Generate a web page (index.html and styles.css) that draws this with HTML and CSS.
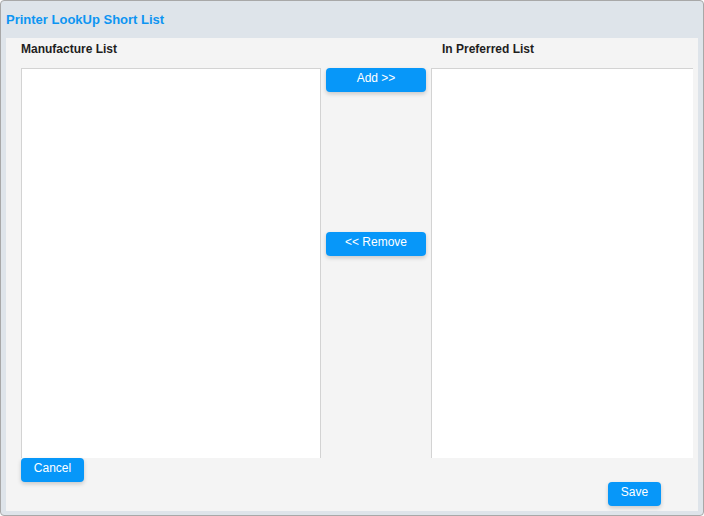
FILE: index.html
```html
<!DOCTYPE html>
<html>
<head>
<meta charset="utf-8">
<link rel="stylesheet" href="styles.css">
</head>
<body>
<div class="frame">
  <div class="title">Printer LookUp Short List</div>
  <div class="panel">
    <div class="grid">
      <div class="head">Manufacture List</div>
      <div></div>
      <div class="head head-right">In Preferred List</div>
      <div class="list list-left"></div>
      <div class="mid">
        <button class="btn btn-mid">Add &gt;&gt;</button>
        <button class="btn btn-mid">&lt;&lt; Remove</button>
      </div>
      <div class="list list-right"></div>
    </div>
    <div class="footer">
      <button class="btn btn-cancel">Cancel</button>
      <button class="btn btn-save">Save</button>
    </div>
  </div>
</div>
</body>
</html>
```

FILE: styles.css
```css
html, body {
  margin: 0;
  padding: 0;
  background: #ffffff;
}
body {
  font-family: "Liberation Sans", Arial, sans-serif;
}
.frame {
  box-sizing: border-box;
  width: 704px;
  height: 516px;
  border: 1px solid #a8a8a8;
  border-radius: 4px;
  background: #dee4ea;
  display: flex;
  flex-direction: column;
}
.title {
  height: 37px;
  box-sizing: border-box;
  padding: 11px 0 0 5px;
  font-size: 13px;
  font-weight: bold;
  color: #0d95f2;
  line-height: 15px;
}
.panel {
  margin: 0 5px;
  height: 473px;
  background: #f4f4f4;
  box-sizing: border-box;
  padding: 0 5px 0 15px;
  display: flex;
  flex-direction: column;
}
.grid {
  display: grid;
  grid-template-columns: 300px 110px 262px;
  grid-template-rows: 30px 390px;
}
.head {
  font-size: 12px;
  font-weight: bold;
  color: #1e1e1e;
  padding-top: 4px;
  line-height: 14px;
}
.head-right {
  padding-left: 11px;
}
.list {
  background: #ffffff;
  border-top: 1px solid #d3d3d3;
  border-left: 1px solid #d3d3d3;
}
.list-left {
  border-right: 1px solid #d3d3d3;
}
.mid {
  display: flex;
  flex-direction: column;
  align-items: flex-start;
  gap: 140px;
  padding-left: 5px;
}
.btn {
  font-family: "Liberation Sans", Arial, sans-serif;
  font-size: 12px;
  color: #ffffff;
  background: #0797f9;
  border: none;
  border-radius: 4px;
  height: 24px;
  padding: 0 0 4px 0;
  box-shadow: 0 2px 4px rgba(0, 0, 0, 0.18);
  line-height: 16px;
}
.btn-mid {
  width: 100px;
}
.footer {
  display: flex;
  flex-direction: column;
}
.btn-cancel {
  width: 63px;
  align-self: flex-start;
}
.btn-save {
  width: 53px;
  align-self: flex-end;
  margin-right: 32px;
}
```
